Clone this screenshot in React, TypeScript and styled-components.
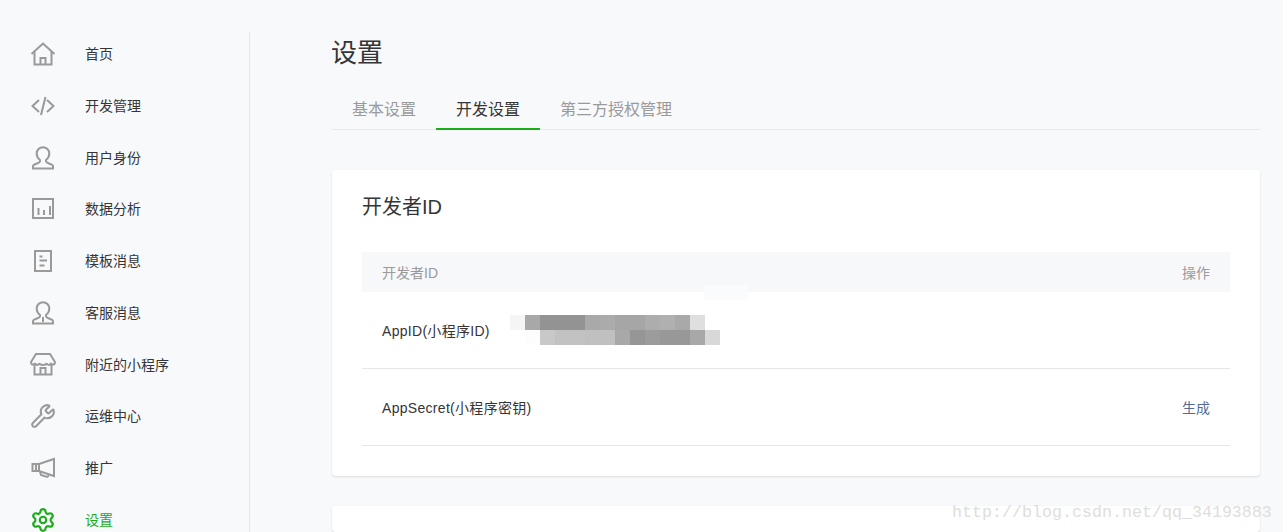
import React from 'react';
import styled, { createGlobalStyle } from 'styled-components';
import { Settings, Wrench } from 'lucide-react';

const GlobalStyle = createGlobalStyle`
    html, body {
        margin: 0;
        padding: 0;
        height: 532px;
        overflow: hidden;
        background: #f8f9fb;
    }
    body, button {
        font-family: "Liberation Sans", "Noto Sans CJK SC", sans-serif;
        color: #353535;
    }
`;

const GRAY = '#9a9a9a';

const Line = styled.svg.attrs({ viewBox: '0 0 26 26', width: 26, height: 26 })`
    fill: none;
    stroke: ${GRAY};
    stroke-width: 2;
    flex: none;
`;

const HomeIcon = () => (
    <Line>
        <path d="M1.500 13 13 2.500 24.500 13" />
        <path d="M4.500 10.500V23.500h17V10.500" />
        <path d="M10.500 23.500V17h5v6.500" />
    </Line>
);

const CodeIcon = () => (
    <Line>
        <path d="M9 7 2.500 13 9 19" />
        <path d="M17 7l6.500 6L17 19" />
        <path d="M15.500 4 11 22" />
    </Line>
);

const UserIcon = () => (
    <Line>
        <path d="M3 23.500V21c0-2 6.500-2.500 7-4.500v-1.500C8 13.500 6.700 11.500 6.700 8.500a6.300 6.300 0 0 1 12.600 0c0 3-1.300 5-3.300 6.500v1.500c.5 2 7 2.500 7 4.500v2.500Z" />
    </Line>
);

const ChartIcon = () => (
    <Line>
        <path d="M2 3h22" />
        <path d="M3 3v19h20V3" />
        <path d="M8.500 12v7M14 14v5M20 10v9" />
    </Line>
);

const DocIcon = () => (
    <Line>
        <path d="M5 3h16v20H5Z" />
        <path d="M9.500 8.500h3M9.500 12.500h7.500M9.500 17.500h5" />
    </Line>
);

const ServiceIcon = () => (
    <Line>
        <path d="M3 23.500V21c0-2 6.500-2.500 7-4.500v-1.500C8 13.500 6.700 11.500 6.700 8.500a6.300 6.300 0 0 1 12.600 0c0 3-1.300 5-3.300 6.500v1.500c.5 2 7 2.500 7 4.500v2.500Z" />
        <path d="M13 17v5" />
    </Line>
);

const StoreIcon = () => (
    <Line>
        <path d="M6 2h14l5 8c0 3-3.500 3.500-4 1-.5 2.500-4.500 2.500-4 0-.5 2.500-7.500 2.500-8 0 .5 2.500-3.500 2.500-4 0-.5 2.500-4 2-4-1Z" />
        <path d="M4.500 13v9.500h17V13" />
        <path d="M10.500 22.500V16h5v6.500" />
    </Line>
);

const HornIcon = () => (
    <Line>
        <path d="M2.500 9H9L24 4v17L9 16H2.500Z" />
        <path d="M9 9v7M6 9v7" />
        <path d="M10 16.500 11 20l6 2 2-1.500" />
    </Line>
);

const Page = styled.div`
    display: flex;
    width: 1283px;
    height: 532px;
`;

const Sidebar = styled.nav`
    flex: none;
    box-sizing: border-box;
    width: 250px;
    height: 500px;
    margin-top: 32px;
    padding-left: 30px;
    border-right: 1px solid #e7e8eb;
    display: flex;
    flex-direction: column;
    gap: 7.78px;
`;

const NavItem = styled.div<{ $active?: boolean }>`
    flex: none;
    height: 44px;
    display: flex;
    align-items: center;
    gap: 29px;
    font-size: 14px;
    color: ${(p) => (p.$active ? '#1aad19' : '#353535')};
    svg {
        flex: none;
        color: ${GRAY};
    }
    span {
        line-height: 18px;
    }
`;

const Main = styled.main`
    flex: none;
    width: 928px;
    margin-left: 82px;
    padding-top: 32px;
`;

const Title = styled.h1`
    margin: 0 0 0 -1px;
    height: 42px;
    line-height: 42px;
    font-size: 26px;
    font-weight: 400;
`;

const Tabs = styled.div`
    display: flex;
    height: 40px;
    margin-top: 16px;
    box-sizing: border-box;
    border-bottom: 1px solid #e7e8eb;
`;

const Tab = styled.div<{ $active?: boolean }>`
    height: 40px;
    box-sizing: border-box;
    padding: 0 20px;
    line-height: 40px;
    font-size: 16px;
    color: ${(p) => (p.$active ? '#353535' : '#9a9a9a')};
    border-bottom: 2px solid ${(p) => (p.$active ? '#1aad19' : 'transparent')};
`;

const Card = styled.section`
    background: #fff;
    border-radius: 4px;
    box-shadow: 0 1px 2px rgba(150, 150, 150, 0.3);
    margin-top: 40px;
    padding: 0 30px 30px;
`;

const NextCard = styled(Card)`
    margin-top: 30px;
    height: 26px;
    padding: 0;
`;

const CardTitle = styled.h2`
    margin: 0;
    height: 82px;
    padding-top: 20px;
    box-sizing: border-box;
    line-height: 34px;
    font-size: 20px;
    font-weight: 400;
`;

const TableHead = styled.div`
    display: flex;
    justify-content: space-between;
    align-items: center;
    height: 40px;
    padding: 0 20px;
    background: #f7f8fa;
    font-size: 14px;
    color: #9a9a9a;
`;

const Row = styled.div`
    position: relative;
    display: flex;
    align-items: center;
    box-sizing: border-box;
    height: 77px;
    padding: 0 20px;
    border-bottom: 1px solid #e7e7eb;
    font-size: 14px;
`;

const Label = styled.div`
    flex: none;
    width: 128px;
    white-space: nowrap;
    letter-spacing: 0.3px;
`;

const Value = styled.div`
    flex: 1;
`;

const Action = styled.a`
    color: #576b95;
`;

const Mosaic = styled.div`
    display: grid;
    grid-template-columns: repeat(14, 15px);
    grid-auto-rows: 15px;
`;

const Cell = styled.span<{ $shade: string }>`
    background: ${(p) => p.$shade};
`;

const Smudge = styled.div`
    position: absolute;
    left: 342px;
    top: -7px;
    width: 44px;
    height: 15px;
    background: #fafbfd;
`;

const Watermark = styled.div`
    position: absolute;
    left: 952px;
    top: 501px;
    font-family: "Liberation Mono", monospace;
    font-size: 16.67px;
    line-height: 24px;
    color: #dededa;
    white-space: nowrap;
`;

const NAV = [
    { label: '首页', icon: <HomeIcon /> },
    { label: '开发管理', icon: <CodeIcon /> },
    { label: '用户身份', icon: <UserIcon /> },
    { label: '数据分析', icon: <ChartIcon /> },
    { label: '模板消息', icon: <DocIcon /> },
    { label: '客服消息', icon: <ServiceIcon /> },
    { label: '附近的小程序', icon: <StoreIcon /> },
    { label: '运维中心', icon: <Wrench size={26} strokeWidth={1.9} /> },
    { label: '推广', icon: <HornIcon /> },
];

const SHADES = [
    '#f5f5f5', '#a8a8a8', '#939393', '#939393', '#939393', '#a9a9a9', '#ababab',
    '#a6a6a6', '#a6a6a6', '#adadad', '#b0b0b0', '#a9a9a9', '#dfdfdf', '#ffffff',
    '#ffffff', '#fdfdfd', '#c8c8c8', '#c2c2c2', '#c2c2c2', '#c0c0c0', '#c0c0c0',
    '#a8a8a8', '#969696', '#9c9c9c', '#989898', '#989898', '#a8a8a8', '#d8d8d8',
];

const App = () => {
    return (
        <>
            <GlobalStyle />
            <Page>
                <Sidebar>
                    {NAV.map((item) => (
                        <NavItem key={item.label}>
                            {item.icon}
                            <span>{item.label}</span>
                        </NavItem>
                    ))}
                    <NavItem $active>
                        <Settings size={26} strokeWidth={2} color="#1aad19" />
                        <span>设置</span>
                    </NavItem>
                </Sidebar>
                <Main>
                    <Title>设置</Title>
                    <Tabs>
                        <Tab>基本设置</Tab>
                        <Tab $active>开发设置</Tab>
                        <Tab>第三方授权管理</Tab>
                    </Tabs>
                    <Card>
                        <CardTitle>开发者ID</CardTitle>
                        <TableHead>
                            <span>开发者ID</span>
                            <span>操作</span>
                        </TableHead>
                        <Row>
                            <Smudge />
                            <Label>AppID(小程序ID)</Label>
                            <Value>
                                <Mosaic>
                                    {SHADES.map((shade, i) => (
                                        <Cell key={i} $shade={shade} />
                                    ))}
                                </Mosaic>
                            </Value>
                        </Row>
                        <Row>
                            <Label>AppSecret(小程序密钥)</Label>
                            <Value />
                            <Action>生成</Action>
                        </Row>
                    </Card>
                    <NextCard />
                </Main>
            </Page>
            <Watermark>http://blog.csdn.net/qq_34193883</Watermark>
        </>
    );
};

export default App;
